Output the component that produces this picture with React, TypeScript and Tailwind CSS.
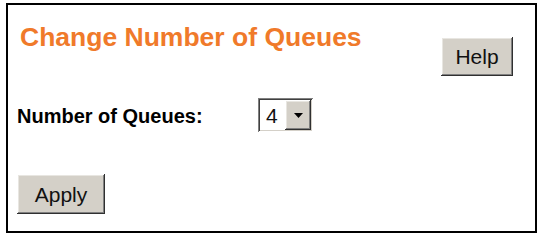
import React from 'react'

const font = { fontFamily: '"Liberation Sans", Arial, sans-serif' }

// classic raised button bevel
const bevel =
  'bg-[#d4d0c8] text-[#111] shadow-[inset_-1px_-1px_#303030,inset_1px_1px_#ffffff,inset_-2px_-2px_#808080,inset_2px_2px_#e8e6e1]'

function ClassicButton({ label, className }: { label: string; className: string }) {
  return (
    <button className={`${bevel} ${className} flex items-center justify-center text-[21px] leading-none`}>
      {label}
    </button>
  )
}

function QueueSelect() {
  return (
    <div className="w-[55px] h-[34px] flex bg-white shadow-[inset_1px_1px_#808080,inset_-1px_-1px_#ffffff,inset_2px_2px_#404040,inset_-2px_-2px_#d4d0c8] p-[2px]">
      <div className="flex-1 flex items-center pl-[6px] text-[21px] leading-none text-[#111]">4</div>
      <div className={`${bevel} w-[26px] flex items-center justify-center`}>
        <svg width="9" height="5" viewBox="0 0 9 5">
          <path d="M0 0h9L4.5 5z" fill="#000" />
        </svg>
      </div>
    </div>
  )
}

export default function App() {
  return (
    <div className="w-[540px] h-[234px] bg-white pt-[3px] pl-[6px]" style={font}>
      <div className="w-[531px] h-[230px] border-2 border-black flex flex-col">
        <div className="flex items-start justify-between pl-[12px] pr-[22px]">
          <h1 className="mt-[17px] text-[26.5px] leading-[30px] font-bold text-[#f07a2a]">
            Change Number of Queues
          </h1>
          <ClassicButton label="Help" className="mt-[32px] w-[72px] h-[39px]" />
        </div>
        <div className="flex items-center mt-[22px] pl-[9px]">
          <span className="w-[241px] text-[20px] leading-[24px] font-bold text-black mt-[2px]">
            Number of Queues:
          </span>
          <QueueSelect />
        </div>
        <div className="mt-[42px] pl-[9px]">
          <ClassicButton label="Apply" className="w-[88px] h-[40px]" />
        </div>
      </div>
    </div>
  )
}
